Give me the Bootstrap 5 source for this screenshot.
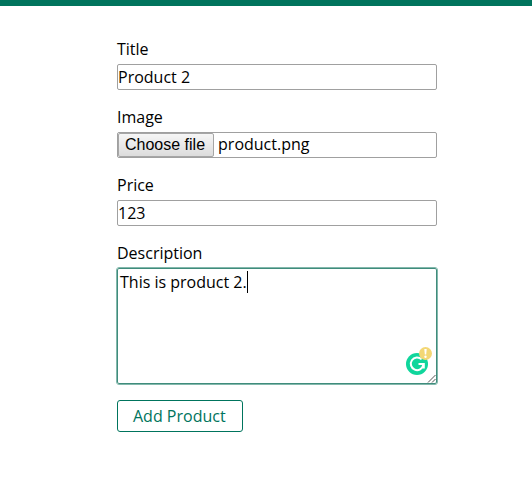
<!DOCTYPE html>
<html lang="en">
<head>
<meta charset="utf-8">
<meta name="viewport" content="width=device-width, initial-scale=1">
<title>Add Product</title>
<link href="https://cdn.jsdelivr.net/npm/bootstrap@5.3.0/dist/css/bootstrap.min.css" rel="stylesheet">
<style>
  body { font-family: "Open Sans", sans-serif; color: #000; }
  .top-bar { height: 6px; background: #00745d; }
  .page-main { padding: 32px 0 32px 22px; }
  .product-form { max-width: 320px; }
  .product-form label { margin-bottom: 4px; line-height: 22px; }
  .field-box { height: 26px; padding: 0; line-height: 24px; color: #000; border: 1px solid #a0a0a0; border-radius: 2px; background: #fff; }
  .field-box:focus { color: #000; border-color: #00745d; box-shadow: none; }
  .file-button { height: 24px; padding: 0 8px 0 6px; font-family: "Liberation Sans", Arial, sans-serif; line-height: 22px; border: 1px solid #a6a6a6; border-radius: 2px; background: linear-gradient(#f6f6f6, #dcdcdc); }
  .file-name { padding-left: 4px; line-height: 22px; }
  textarea.description-box { height: 116px; padding: 2px; line-height: 22px; border-color: #3f8c7c; outline: 1px solid #83b8ac; resize: none; }
  .text-caret { top: 3px; left: 130px; width: 1px; height: 22px; background: #000; }
  .assistant-badge { right: 5px; bottom: 8px; }
  .resize-grip { right: 1px; bottom: 1px; }
  .submit-button { padding: 3px 16px 3px 15px; line-height: 24px; color: #00745d; border: 1px solid #00745d; border-radius: 3px; background: #fff; }
  .submit-button:hover { color: #fff; background: #00745d; }
</style>
</head>
<body class="bg-white">
<header class="top-bar"></header>
<main class="page-main">
  <form class="product-form mx-auto">
    <div class="mb-3">
      <label class="d-block" for="title">Title</label>
      <input class="form-control field-box" type="text" id="title" value="Product 2">
    </div>
    <div class="mb-3">
      <label class="d-block" for="image">Image</label>
      <div class="field-box position-relative d-flex">
        <span class="file-button" aria-hidden="true">Choose file</span>
        <span class="file-name">product.png</span>
        <input class="position-absolute top-0 start-0 w-100 h-100 opacity-0" type="file" id="image" accept="image/*">
      </div>
    </div>
    <div class="mb-3">
      <label class="d-block" for="price">Price</label>
      <input class="form-control field-box" type="text" inputmode="decimal" id="price" value="123">
    </div>
    <div class="mb-3">
      <label class="d-block" for="description">Description</label>
      <div class="position-relative">
        <textarea class="form-control field-box description-box d-block" id="description">This is product 2.</textarea>
        <span class="text-caret position-absolute"></span>
        <svg class="assistant-badge position-absolute" width="26" height="29" viewBox="0 0 26 29" aria-hidden="true">
          <circle cx="11" cy="17" r="11" fill="#10d69c"/>
          <path d="M15.6 12.4a6.3 6.3 0 1 0 1.7 5.6" fill="none" stroke="#fff" stroke-width="2"/>
          <path d="M12.5 17h5.300v4.500" fill="none" stroke="#fff" stroke-width="2"/>
          <circle cx="19.500" cy="6.500" r="6.500" fill="#f3d775"/>
          <path d="M18.300 2h2.400l-.5 5.500h-1.400z" fill="#fff"/>
          <circle cx="19.500" cy="9.800" r="1.200" fill="#fff"/>
        </svg>
        <svg class="resize-grip position-absolute" width="9" height="9" viewBox="0 0 9 9" aria-hidden="true">
          <path d="M1 8.500 8.500 1M5 8.500 8.500 5" fill="none" stroke="#555" stroke-width="1"/>
        </svg>
      </div>
    </div>
    <button class="btn submit-button" type="submit">Add Product</button>
  </form>
</main>
<script src="https://cdn.jsdelivr.net/npm/bootstrap@5.3.0/dist/js/bootstrap.bundle.min.js"></script>
</body>
</html>
